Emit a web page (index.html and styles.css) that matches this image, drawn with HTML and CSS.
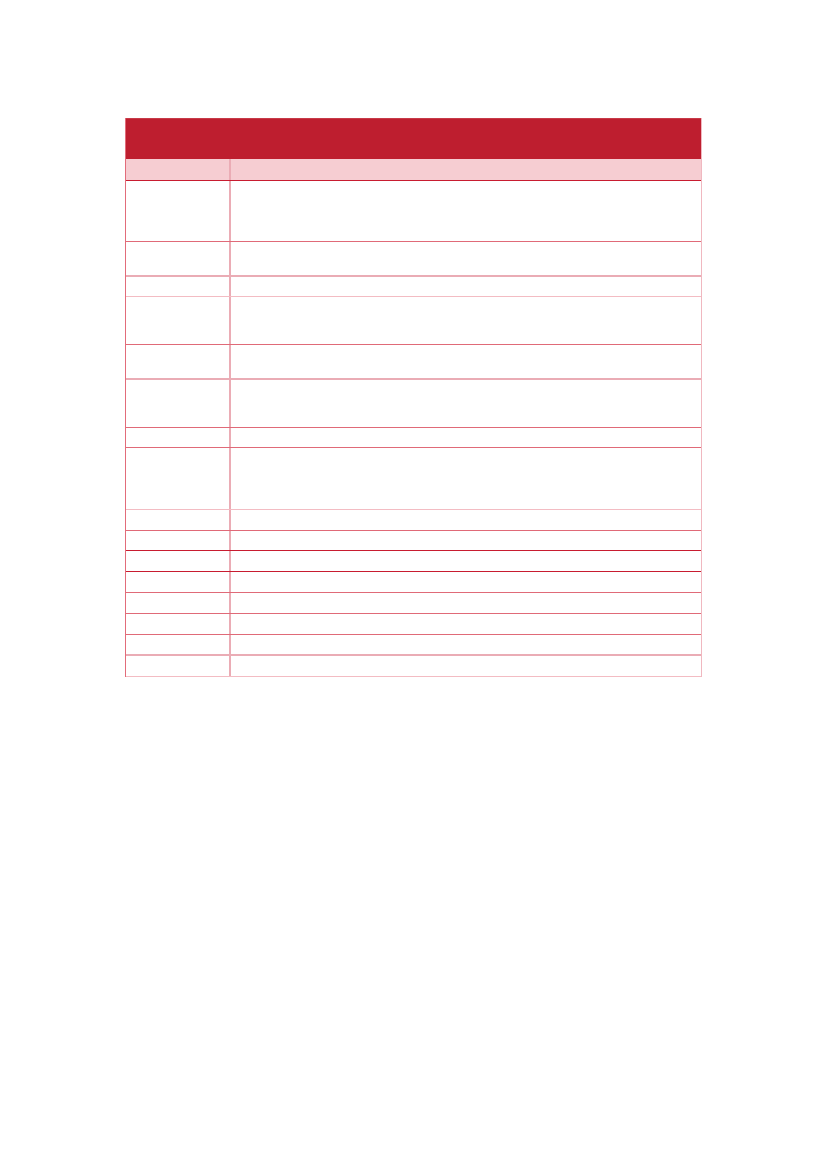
FILE: index.html
```html
<!DOCTYPE html>
<html>
<head>
<meta charset="utf-8">
<link rel="stylesheet" href="styles.css">
</head>
<body>
<div class="page">
  <div class="table">
    <div class="head"></div>
    <div class="row sub l-dark"><div class="c1"></div><div class="c2"></div></div>
    <div class="row l-mid" style="height:61px"><div class="c1"></div><div class="c2"></div></div>
    <div class="row l-pale2" style="height:35px"><div class="c1"></div><div class="c2"></div></div>
    <div class="row l-pale" style="height:20px"><div class="c1"></div><div class="c2"></div></div>
    <div class="row l-mid" style="height:48px"><div class="c1"></div><div class="c2"></div></div>
    <div class="row l-pale2" style="height:35px"><div class="c1"></div><div class="c2"></div></div>
    <div class="row l-mid" style="height:48px"><div class="c1"></div><div class="c2"></div></div>
    <div class="row l-mid" style="height:20px"><div class="c1"></div><div class="c2"></div></div>
    <div class="row l-pale" style="height:62px"><div class="c1"></div><div class="c2"></div></div>
    <div class="row l-mid" style="height:21px"><div class="c1"></div><div class="c2"></div></div>
    <div class="row l-dark" style="height:20px"><div class="c1"></div><div class="c2"></div></div>
    <div class="row l-dark" style="height:21px"><div class="c1"></div><div class="c2"></div></div>
    <div class="row l-mid" style="height:21px"><div class="c1"></div><div class="c2"></div></div>
    <div class="row l-mid" style="height:21px"><div class="c1"></div><div class="c2"></div></div>
    <div class="row l-mid" style="height:21px"><div class="c1"></div><div class="c2"></div></div>
    <div class="row l-pale2" style="height:21px"><div class="c1"></div><div class="c2"></div></div>
    <div class="row l-pale" style="height:21px"><div class="c1"></div><div class="c2"></div></div>
  </div>
</div>
</body>
</html>
```
FILE: styles.css
```css
html, body {
  margin: 0;
  padding: 0;
  background: #ffffff;
  font-family: "Liberation Sans", Arial, sans-serif;
}
.page {
  padding-top: 118px;
  padding-left: 125px;
}
.table {
  width: 577px;
  border-left: 1.5px solid #e26c7a;
  border-right: 1px solid #f0b8c0;
  box-sizing: border-box;
}
.head {
  height: 41px;
  background: #be1e2f;
  border-top: 1px solid #c83a48;
  box-sizing: border-box;
}
.row {
  display: grid;
  grid-template-columns: 104.5px 1fr;
  box-sizing: border-box;
}
.row.sub {
  height: 21.5px;
  background: #f6cdd2;
}
.c1 {
  border-right: 2px solid #ebacb5;
}
.l-dark { border-bottom: 1.5px solid #c81c30; }
.l-mid { border-bottom: 1.5px solid #e06a78; }
.l-pale2 { border-bottom: 2px solid #eaacb5; }
.l-pale { border-bottom: 1.5px solid #f3bcc3; }
```
